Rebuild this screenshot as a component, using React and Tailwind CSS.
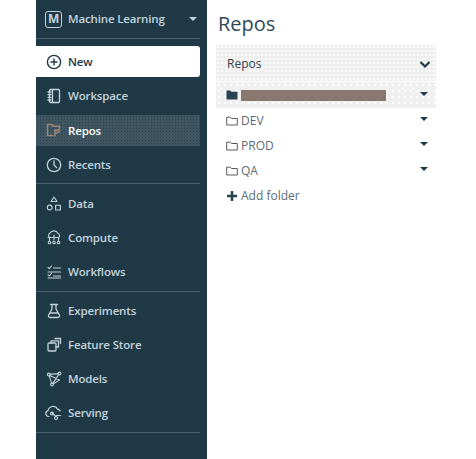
import React from "react";

const S = ({ children, size = 18, sw = 1.3 }) => (
  <svg width={size} height={size} viewBox="0 0 18 18" fill="none" stroke="currentColor" strokeWidth={sw} strokeLinecap="round" strokeLinejoin="round" className="shrink-0">
    {children}
  </svg>
);

const icons = {
  New: <S sw={1.4}><circle cx="9" cy="9" r="6.6" /><path d="M9 6v6M6 9h6" /></S>,
  Workspace: <S><rect x="4.5" y="2.5" width="10" height="13" rx="1" /><path d="M7.5 2.5v13M3 5h3M3 7.7h3M3 10.3h3M3 13h3" /></S>,
  Repos: (
    <S sw={1.6}>
      <path d="M8 14.5H2.5v-11h4.2l1.5 1.8h6.3v2.2" stroke="#9c8378" />
      <path d="M10 8.5v6.5M10 10l4-1.5v2.5l-4 1.5" stroke="#9c8378" />
    </S>
  ),
  Recents: <S><circle cx="9" cy="9" r="6.7" /><path d="M9 4.8V9l2.6 2.6" /></S>,
  Data: <S sw={1.1}><path d="M9 2l3 4.5H6z" /><circle cx="4.7" cy="12.5" r="2.4" /><rect x="10.6" y="10.2" width="4.8" height="4.8" /></S>,
  Compute: <S sw={1.1}><path d="M4.5 8.5a2.6 2.6 0 0 1 .3-4.2A4.6 4.6 0 0 1 13 4.4a2.4 2.4 0 0 1 .7 4.1H3M9 6v5M4.5 8.5V12M13.5 8.5V12" /><circle cx="4.5" cy="13.5" r="1.3" /><circle cx="9" cy="13.5" r="1.3" /><circle cx="13.5" cy="13.5" r="1.3" /></S>,
  Workflows: <S sw={1.1}><path d="M3 4.5l1.2 1.2L6.6 3M8.5 5h7M3 9h12.5M3 11.8l1.2 1.2 2.4-2.7M8.5 13h7M3 15h12.5" /></S>,
  Experiments: <S><path d="M5.5 2.5h7M7 2.5v4.5L3.6 13a1.7 1.7 0 0 0 1.5 2.5h7.8a1.7 1.7 0 0 0 1.5-2.5L11 7V2.5M5 11h8" /></S>,
  "Feature Store": <S><rect x="3" y="7" width="8" height="8" rx="1" /><path d="M6 7V4.8h7.5V11H11M10 2.5h5.5v5" /></S>,
  Models: <S sw={1.1}><circle cx="3.8" cy="4.5" r="1.4" /><circle cx="14.5" cy="3.5" r="1.4" /><circle cx="7" cy="14.5" r="1.4" /><path d="M5 4.4l8-.8M13.6 4.6L7.9 13.4M4.2 5.9l2.4 7.2M4.8 5.6l9.6 4.4-6 3.9" /></S>,
  Serving: <S sw={1.2}><path d="M4 12.5H3.5a3 3 0 0 1-.4-5.9 5 5 0 0 1 9.4-1.4 3.6 3.6 0 0 1 2.6 1.6M15.5 11.5h-4M7.5 9.5l3 2.5" /><circle cx="7" cy="9.5" r="1.4" /><circle cx="11" cy="14" r="1.5" /></S>,
};

function Row({ label, kind }) {
  const cls =
    kind === "new"
      ? "bg-white text-[#1f3a46] rounded-r-[3px]"
      : kind === "active"
      ? "bg-[#3f5662] bg-[radial-gradient(#26414d_0.7px,transparent_0.8px)] bg-[length:3px_3px] text-white font-bold"
      : "text-[#c3d2dc]";
  return (
    <div className={`h-[31px] flex items-center pl-[9px] gap-[5px] text-[11.5px] font-semibold tracking-[-0.15px] ${cls}`}>
      {icons[label]}
      <span className={kind === "active" ? "mt-[1px]" : ""}>{label}</span>
    </div>
  );
}

const Divider = ({ cls }) => <div className={`h-px bg-[#4a616c] ${cls}`} />;

function Caret({ cls = "" }) {
  return <div className={`w-0 h-0 border-l-[4px] border-r-[4px] border-t-[4px] border-l-transparent border-r-transparent border-t-[#1f3a46] ${cls}`} />;
}

function Folder({ name }) {
  return (
    <div className="h-[25px] flex items-center pl-[10px] pr-[8px] text-[12px] text-[#5a6b74]">
      <svg width="12" height="12" viewBox="0 0 12 12" fill="none" stroke="#5a5a5a" strokeWidth="1" className="shrink-0">
        <path d="M.7 10V2.2h3.6l1.1 1.3h5.9V10z" />
      </svg>
      <span className="ml-[3px]">{name}</span>
      <Caret cls="ml-auto mb-[4px]" />
    </div>
  );
}

export default function App() {
  return (
    <div className="w-[476px] h-[459px] bg-white flex pl-[36px] overflow-hidden" style={{ fontFamily: '"Open Sans", sans-serif' }}>
      <nav className="w-[171px] h-full bg-[#1f3a46] pr-[7px] flex flex-col shrink-0">
        <div className="h-[38px] flex items-center pl-[9px] text-[11.5px] font-semibold tracking-[-0.15px] text-[#c3d2dc]">
          <div className="w-[17px] h-[17px] border border-[#c3d2dc] rounded-[3px] flex items-center justify-center text-[12px] font-bold leading-none">M</div>
          <span className="ml-[6px]">Machine Learning</span>
          <Caret cls="ml-auto mr-[3px] border-t-[#c3d2dc]" />
        </div>
        <Divider />
        <div className="mt-[7px] flex flex-col gap-[3.4px]">
          <Row label="New" kind="new" />
          <Row label="Workspace" />
          <Row label="Repos" kind="active" />
          <Row label="Recents" />
        </div>
        <Divider cls="mt-[3px]" />
        <div className="mt-[4px] flex flex-col gap-[3px]">
          <Row label="Data" />
          <Row label="Compute" />
          <Row label="Workflows" />
        </div>
        <Divider cls="mt-[4px]" />
        <div className="mt-[3px] flex flex-col gap-[3px]">
          <Row label="Experiments" />
          <Row label="Feature Store" />
          <Row label="Models" />
          <Row label="Serving" />
        </div>
        <Divider cls="mt-[4px]" />
      </nav>
      <main className="flex-1 pl-[9px] min-w-0">
        <h1 className="h-[45px] pt-[9px] pl-[2px] text-[20px] leading-[30px] text-[#31495a]">Repos</h1>
        <div className="w-[220px]">
          <div className="h-[36px] bg-[#eeeeee] bg-[radial-gradient(#ffffff_0.7px,transparent_0.8px)] bg-[length:4px_4px] flex items-center pl-[11px] pr-[5px] pt-[2px] text-[12px] text-[#2c3e48]">
            <span>Repos</span>
            <svg width="12" height="12" viewBox="0 0 12 12" fill="none" stroke="#1f3a46" strokeWidth="2.2" className="ml-auto">
              <path d="M1.5 4l4.5 4.5L10.5 4" />
            </svg>
          </div>
          <div className="mt-px h-[26px] bg-[#f0f0f0] bg-[radial-gradient(#ffffff_0.8px,transparent_0.9px)] bg-[length:6px_6px] flex items-center pl-[10px] pr-[8px]">
            <svg width="12" height="12" viewBox="0 0 12 12" fill="#2c4452" className="shrink-0">
              <path d="M.5 10.5v-9h4l1 1.3h6v7.7z" />
            </svg>
            <div className="w-[145px] h-[11px] ml-[3px] bg-[#8a7770] bg-[radial-gradient(#3f6f9f_0.7px,transparent_0.8px)] bg-[length:6px_4px]" />
            <Caret cls="ml-auto mb-[3px]" />
          </div>
          <div>
            <Folder name="DEV" />
            <Folder name="PROD" />
            <Folder name="QA" />
          </div>
          <div className="h-[25px] flex items-center pl-[11px] text-[12px] text-[#5a6b74]">
            <svg width="10" height="10" viewBox="0 0 10 10" stroke="#2c4452" strokeWidth="2.6"><path d="M5 0v10M0 5h10" /></svg>
            <span className="ml-[4px]">Add folder</span>
          </div>
        </div>
      </main>
    </div>
  );
}
